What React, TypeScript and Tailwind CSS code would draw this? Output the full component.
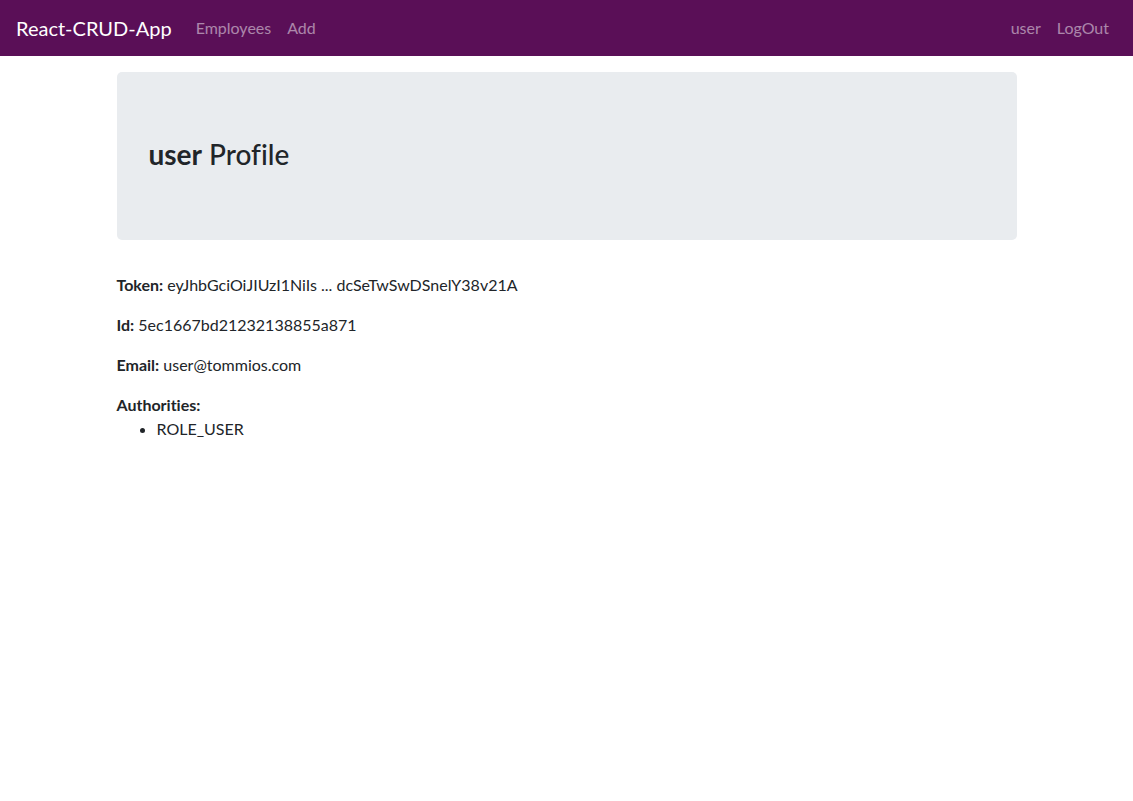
import React from "react";

export default function App() {
  return (
    <div className="min-h-[801px] bg-white text-[#212529] font-['Lato',_'Noto_Sans',_sans-serif] [font-variant-ligatures:none]">
      <nav className="h-14 bg-[#5a0f57] flex items-center px-4 py-2">
        <a className="text-white text-[20px] leading-[30px] mr-4 whitespace-nowrap">React-CRUD-App</a>
        <div className="flex">
          <a className="px-2 text-[16px] leading-6 text-white/50">Employees</a>
          <a className="px-2 text-[16px] leading-6 text-white/50">Add</a>
        </div>
        <div className="ml-auto flex">
          <a className="px-2 text-[16px] leading-6 text-white/50">user</a>
          <a className="px-2 text-[16px] leading-6 text-white/50">LogOut</a>
        </div>
      </nav>
      <div className="w-[900px] mx-auto mt-4 text-[16px] leading-6">
        <header className="bg-[#e9ecef] rounded-[5px] pl-8 pr-8 pt-[65px] pb-[61px] mb-[33px]">
          <h3 className="text-[28px] leading-[34px] font-medium mb-2">
            <strong className="font-bold">user</strong> Profile
          </h3>
        </header>
        <p className="mb-4">
          <strong className="font-bold">Token:</strong> eyJhbGciOiJIUzI1NiIs ... dcSeTwSwDSnelY38v21A
        </p>
        <p className="mb-4">
          <strong className="font-bold">Id:</strong> 5ec1667bd21232138855a871
        </p>
        <p className="mb-4">
          <strong className="font-bold">Email:</strong> user@tommios.com
        </p>
        <strong className="font-bold block">Authorities:</strong>
        <ul className="list-disc pl-10 mb-4">
          <li>ROLE_USER</li>
        </ul>
      </div>
    </div>
  );
}
